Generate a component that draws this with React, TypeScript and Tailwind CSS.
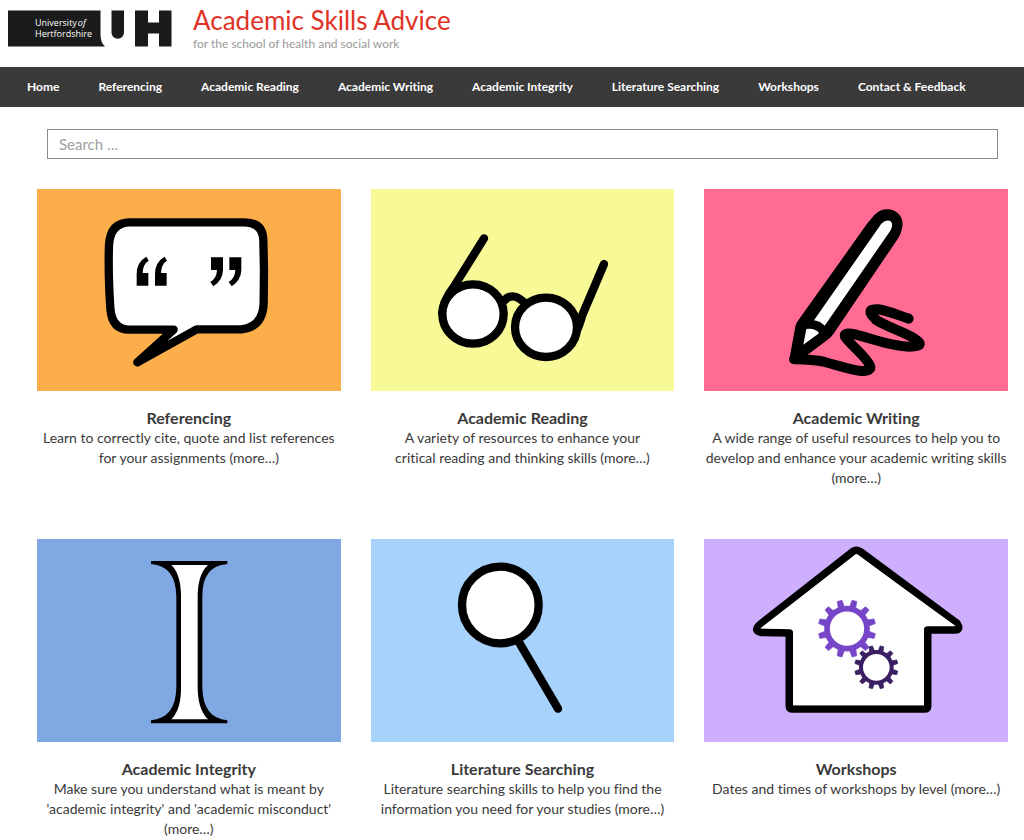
import type { ReactNode } from "react";

const navItems = [
  "Home",
  "Referencing",
  "Academic Reading",
  "Academic Writing",
  "Academic Integrity",
  "Literature Searching",
  "Workshops",
  "Contact & Feedback",
];

function Logo() {
  return (
    <svg viewBox="0 0 164 37" className="h-[37px] w-[164px] shrink-0" role="img" aria-label="University of Hertfordshire">
      <path d="M0 0.5H92.500V24Q92.500 33 97 36.500H0Z" fill="#1b1b1b" />
      <text x="27" y="16" fontSize="9" fill="#ffffff" fontFamily="Open Sans, sans-serif">
        University<tspan fontStyle="italic" dx="1">of</tspan>
      </text>
      <text x="27" y="27" fontSize="9" fill="#ffffff" fontFamily="Open Sans, sans-serif">
        Hertfordshire
      </text>
      <path d="M103.500 0.500H116V22.500A6.250 6.250 0 0 1 103.500 22.500Z" fill="#1b1b1b" />
      <rect x="127" y="0.500" width="13" height="36" fill="#1b1b1b" />
      <rect x="151" y="0.500" width="12.500" height="36" fill="#1b1b1b" />
      <rect x="138" y="12.500" width="15" height="11" fill="#1b1b1b" />
    </svg>
  );
}

function SpeechBubble() {
  return (
    <>
      <path
        d="M300 127H640Q699 127 700 180L702 270L701 370Q699 440 635 448L500 448L322 547L431 449H300Q246 450 241 385Q234 280 237 195Q241 127 300 127Z"
        fill="#fff"
        stroke="#000"
        strokeWidth="25"
        strokeLinejoin="round"
      />
      {[0, 55].map((x) => (
        <path key={x} transform={`translate(${x} 0)`} d="M320 317V282Q320 246 349 230L356 242Q339 252 338 279H355V317Z" />
      ))}
      {[0, 55].map((x) => (
        <path key={x} transform={`translate(${x} 0)`} d="M543 232H579V270Q578 302 550 319L541 306Q560 295 561 270H543Z" />
      ))}
    </>
  );
}

function Glasses() {
  return (
    <g stroke="#000" strokeWidth="25" strokeLinecap="round" fill="none">
      <path d="M357 175L270 315Q234 362 232 400" />
      <path d="M717 252L652 405Q642 440 636 450" />
      <path d="M418 362Q440 335 474 364" />
      <ellipse cx="324" cy="402" rx="92" ry="89" fill="#fff" />
      <ellipse cx="543" cy="442" rx="93" ry="89" fill="#fff" />
    </g>
  );
}

function Pencil() {
  return (
    <>
      <path
        d="M283 538C330 538 350 540 375 546C420 558 450 569 485 573Q517 573 511 557C500 530 447 490 436 470Q432 458 455 461C510 472 570 500 630 500C665 500 670 492 645 476C615 456 560 440 530 420Q492 385 535 388C570 393 600 408 627 416"
        fill="none"
        stroke="#000"
        strokeWidth="30"
        strokeLinecap="round"
        strokeLinejoin="round"
      />
      <path d="M524 105C560 68 625 95 605 153Q603 163 594 177L401 462Q394 473 383 480L324 524L310 549Q268 552 271 527L287 440Q288 430 296 421L501 133Z" />
      <path d="M545 131Q560 117 573 124Q582 133 573 151L375 437Q362 424 343 421Z" fill="#fff" />
      <path d="M320 447Q347 443 358 460L311 494Z" fill="#fff" />
    </>
  );
}

function Pillar() {
  return (
    <>
      <path d="M363 93H592V102Q516 108 517 200V472Q518 564 592 571V580H363V571Q438 564 439 472V200Q438 108 363 102Z" />
      <path
        d="M424 105H534Q502 134 503 205V467Q502 536 534 568H424Q455 536 453 467V205Q454 134 424 105Z"
        fill="#fff"
      />
    </>
  );
}

function Magnifier() {
  return (
    <g stroke="#000" strokeWidth="25" strokeLinecap="round">
      <path d="M464 340L579 536" />
      <circle cx="406" cy="225" r="115" fill="#fff" />
    </g>
  );
}

interface GearProps {
  cx: number;
  cy: number;
  radius: number;
  ring: number;
  tip: number;
  tooth: number;
  color: string;
}

function Gear({ cx, cy, radius, ring, tip, tooth, color }: GearProps) {
  return (
    <g transform={`translate(${cx} ${cy})`} stroke={color} fill="none">
      <circle r={radius} strokeWidth={ring} />
      {Array.from({ length: 12 }, (_, i) => (
        <path
          key={i}
          transform={`rotate(${i * 30 + 15})`}
          d={`M${-tooth * 0.62} ${-radius}L${-tooth * 0.45} ${-tip}H${tooth * 0.45}L${tooth * 0.62} ${-radius}Z`}
          fill={color}
          strokeWidth="2"
          strokeLinejoin="round"
        />
      ))}
    </g>
  );
}

function House() {
  return (
    <>
      <path
        d="M459 65Q470 57 482 65L772 280Q785 299 765 300H684V527Q684 537 674 537H280Q269 537 269 527V309L183 307Q161 302 180 284Z"
        fill="#fff"
        stroke="#000"
        strokeWidth="23"
        strokeLinejoin="round"
      />
      <path d="M470 72L768 288H673V526H280V297L182 295Z" fill="#fff" />
      <Gear cx={442} cy={296} radius={60} ring={17} tip={86} tooth={16} color="#7746c8" />
      <Gear cx={530} cy={412} radius={46} ring={12} tip={65} tooth={12} color="#3a2063" />
    </>
  );
}

interface Topic {
  title: string;
  lines: string[];
  moreOnOwnLine?: boolean;
  background: string;
  viewBox: string;
  art: ReactNode;
}

const topics: Topic[] = [
  {
    title: "Referencing",
    lines: ["Learn to correctly cite, quote and list references", "for your assignments"],
    background: "bg-[#fbae49]",
    viewBox: "21 27 911 607",
    art: <SpeechBubble />,
  },
  {
    title: "Academic Reading",
    lines: ["A variety of resources to enhance your", "critical reading and thinking skills"],
    background: "bg-[#f8fa98]",
    viewBox: "18 27 911 607",
    art: <Glasses />,
  },
  {
    title: "Academic Writing",
    lines: ["A wide range of useful resources to help you to", "develop and enhance your academic writing skills"],
    moreOnOwnLine: true,
    background: "bg-[#ff6b93]",
    viewBox: "13 27 911 607",
    art: <Pencil />,
  },
  {
    title: "Academic Integrity",
    lines: ["Make sure you understand what is meant by", "'academic integrity' and 'academic misconduct'"],
    moreOnOwnLine: true,
    background: "bg-[#80a8e3]",
    viewBox: "21 27 911 607",
    art: <Pillar />,
  },
  {
    title: "Literature Searching",
    lines: ["Literature searching skills to help you find the", "information you need for your studies"],
    background: "bg-[#a6d2fb]",
    viewBox: "18 27 911 607",
    art: <Magnifier />,
  },
  {
    title: "Workshops",
    lines: ["Dates and times of workshops by level"],
    background: "bg-[#cdaffd]",
    viewBox: "13 27 911 607",
    art: <House />,
  },
];

export default function App() {
  return (
    <div className="bg-white font-['Lato',sans-serif] text-[#3a3a3a] [font-variant-ligatures:none]">
      <header className="flex h-[67px] items-start gap-[21px] px-2 pt-[10px]">
        <Logo />
        <div className="-mt-1">
          <h1 className="text-[26px] leading-7 text-[#e03226]">Academic Skills Advice</h1>
          <p className="text-[12px] leading-5 text-[#9a9a9a]">for the school of health and social work</p>
        </div>
      </header>

      <nav className="flex min-h-10 flex-wrap items-center gap-x-[39px] bg-[#3a3a3a] px-[27px]">
        {navItems.map((item) => (
          <a key={item} href="#" className="text-[12px] leading-5 font-bold whitespace-nowrap text-white">
            {item}
          </a>
        ))}
      </nav>

      <form role="search" className="pt-[22px] pr-[26px] pl-[47px]">
        <input
          type="search"
          aria-label="Search"
          placeholder="Search …"
          className="block h-[30px] w-full border border-[#8d8a94] bg-white px-[11px] text-[15px] placeholder:text-[#a0a0a0]"
        />
      </form>

      <main className="grid grid-cols-3 gap-x-[30px] gap-y-[51px] pt-[30px] pr-4 pl-[37px]">
        {topics.map((topic) => (
          <article key={topic.title} className="text-center">
            <a href="#" aria-label={topic.title} className={`block ${topic.background}`}>
              <svg viewBox={topic.viewBox} className="block w-full" aria-hidden="true">
                {topic.art}
              </svg>
            </a>
            <h2 className="mt-[17px] text-[16px] leading-5 font-bold">{topic.title}</h2>
            <p className="text-[14px] leading-5">
              {topic.lines.map((line, i) => (
                <span key={line}>
                  {i > 0 && <br />}
                  {line}
                </span>
              ))}
              {topic.moreOnOwnLine ? <br /> : " "}
              <a href="#">(more…)</a>
            </p>
          </article>
        ))}
      </main>
    </div>
  );
}
